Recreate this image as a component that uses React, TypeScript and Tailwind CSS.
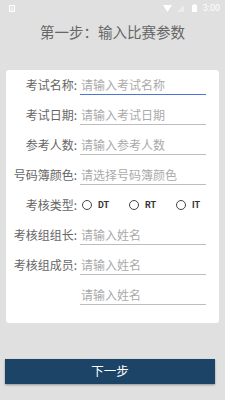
const font = { fontFamily: '"Noto Sans CJK SC", "Noto Sans", sans-serif' };

function Field({ label, placeholder, active }: { label: string; placeholder: string; active?: boolean }) {
  return (
    <div className="flex h-[30px] items-center">
      <div className="w-[71px] shrink-0 text-right text-[12px] leading-none text-[#666]">{label}</div>
      <div
        className={`ml-[3px] flex h-[19px] w-[126px] items-center border-b-[1.5px] pl-[1px] text-[12px] leading-none text-[#aaa] ${
          active ? 'border-[#4d72d8]' : 'border-[#bdbdbd]'
        }`}
      >
        {placeholder}
      </div>
    </div>
  );
}

function Radio({ label }: { label: string }) {
  return (
    <div className="flex w-[47px] items-center">
      <span className="h-[10px] w-[10px] rounded-full border border-[#444]" />
      <span className="ml-[6px] text-[9px] font-bold leading-none text-[#333]" style={{ fontFamily: '"Roboto", sans-serif' }}>
        {label}
      </span>
    </div>
  );
}

export default function App() {
  return (
    <div className="h-[400px] w-[225px] overflow-hidden bg-[#e0e0e0]" style={font}>
      {/* status bar */}
      <div className="flex h-4 items-center justify-between pl-[9px] pr-[5px]">
        <div className="flex h-[7px] w-[6px] items-center justify-center border border-white text-[5px] leading-none text-white">A</div>
        <div className="flex items-center gap-[5px] text-white">
          <svg width="9" height="7" viewBox="0 0 9 7">
            <path d="M0 0 H9 L4.5 7 Z" fill="white" />
          </svg>
          <svg width="7" height="7" viewBox="0 0 7 7" className="opacity-40">
            <path d="M0 7 L7 0 V7 Z" fill="white" />
          </svg>
          <svg width="5" height="8" viewBox="0 0 5 8" className="ml-[3px]">
            <rect x="1.5" y="0" width="2" height="1" fill="white" />
            <rect x="0" y="1" width="5" height="7" rx="0.5" fill="white" />
          </svg>
          <span className="ml-[1px] text-[9px] leading-none" style={{ fontFamily: '"Roboto", sans-serif' }}>3:00</span>
        </div>
      </div>

      <div className="mt-[6px] h-5 text-center text-[14.5px] leading-5 text-[#666]">第一步：输入比赛参数</div>

      <div className="ml-[6px] mt-[28px] w-[213px] rounded-[3px] bg-white pb-[13px]">
        <Field label="考试名称:" placeholder="请输入考试名称" active />
        <Field label="考试日期:" placeholder="请输入考试日期" />
        <Field label="参考人数:" placeholder="请输入参考人数" />
        <Field label="号码簿颜色:" placeholder="请选择号码簿颜色" />
        <div className="flex h-[30px] items-center">
          <div className="w-[71px] shrink-0 text-right text-[12px] leading-none text-[#666]">考核类型:</div>
          <div className="ml-[5px] flex items-center">
            <Radio label="DT" />
            <Radio label="RT" />
            <Radio label="IT" />
          </div>
        </div>
        <Field label="考核组组长:" placeholder="请输入姓名" />
        <Field label="考核组成员:" placeholder="请输入姓名" />
        <Field label="" placeholder="请输入姓名" />
      </div>

      <button className="ml-[5px] mt-[36px] flex h-[25px] w-[210px] items-center justify-center bg-[#1b4466] text-[12.5px] text-white shadow-[0_1px_2px_rgba(0,0,0,0.35)]">
        下一步
      </button>
    </div>
  );
}
